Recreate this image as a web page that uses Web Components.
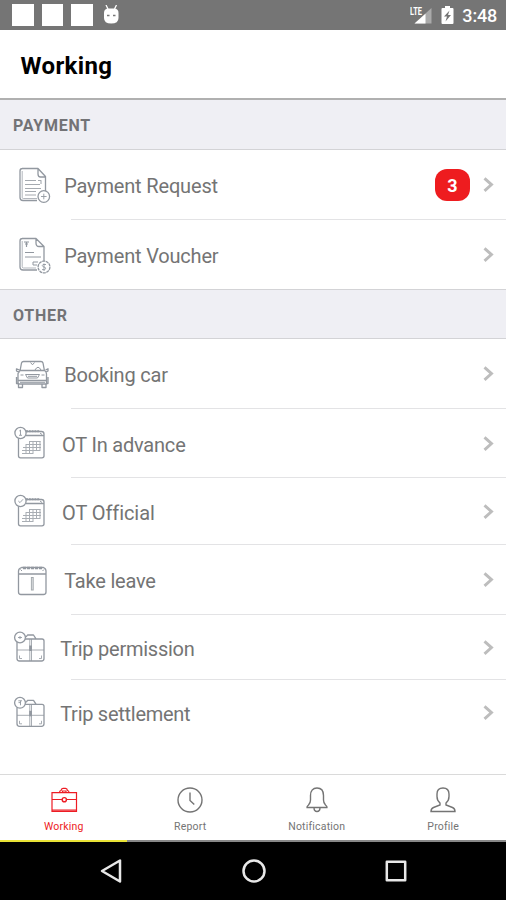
<!DOCTYPE html>
<html lang="en"><head><meta charset="utf-8"><title>Working</title>
<style>
html,body{margin:0;padding:0}
body{width:506px;height:900px;overflow:hidden;background:#fff;font-family:Roboto,"Liberation Sans",sans-serif;color:#707070}
</style></head><body>
<work-app></work-app>
<script>
const define=(name,html,setup)=>customElements.define(name,class extends HTMLElement{
  connectedCallback(){
    if(this.shadowRoot)return;
    const t=document.createElement('template');
    t.innerHTML=html;
    const r=this.attachShadow({mode:'open'});
    r.append(t.content.cloneNode(true));
    if(setup)setup(this,r);
  }
});

const calendar=`<path d="M20 431.500H41.500Q44 431.500 44 434V456Q44 457.800 42 457.800H20.500Q18.500 457.800 18.500 456V438M26 435.500H43.500" /><path d="M26 431.300H40" stroke-width="2" stroke-dasharray="2 .8"/><path d="M40 433L42 434.500" stroke-width="1"/><circle cx="20.500" cy="433" r="5.600" fill="#fff"/>
<g stroke="#a9aeb4" stroke-width="1"><path d="M30 441.500H40.500M26 444.500H41M23 447.500H41M22 450.500H40M22 453.500H33M26 444V454M29.500 441V454M33 441V454M36.500 441V451M40 441V451"/></g>`;
const bag=`<path d="M25 636.500H26.500L27.500 635H33.500L36 638.800M25 639H42Q44 639 44 641V658.500Q44 661 41.500 661H19.500Q17 661 17 658.500V642" /><path d="M17 650H44M29.800 639V661M31.500 639V661" stroke-width=".8"/><path d="M19.500 655.500V658.500H22M41.500 655.500V658.500H39" stroke-width=".8"/><path d="M30.600 645.500V651" stroke-width="2.800"/><circle cx="20" cy="637.500" r="5.400" fill="#fff"/>`;
const icons={
 request:['0 150 56 70',`<path d="M22 168.500H38L45.500 176.500V192M38 168.500V174Q38 177 40.500 177H45M37 200.500H23Q20 200.500 20 197.500V171Q20 168.500 22.500 168.500" /><path d="M22.200 171V197.500Q22.200 198.500 23.500 198.500H37" stroke-width=".7"/><path d="M25 180.500H36M38 180.500H41V184M25 184.500H40M25 188.500H41M25 191.500H36M25 195H36" stroke-width="1.100" stroke="#a5aab0"/><circle cx="43.800" cy="196.500" r="5.800" fill="#fff"/><path d="M41 196.500H46.600M43.800 193.700V199.300" stroke-width=".9"/>`],
 voucher:['0 220 56 69',`<path d="M22 238.500H36L44 246.500V262M36 238.500V243Q36 246.500 39 246.500H44M37 270H23Q20 270 20 267V241Q20 238.500 22.500 238.500" /><path d="M22.200 241V266.500Q22.200 268 23.500 268H36" stroke-width=".7"/><path d="M24 242H29M25 244H28M26.500 242V247" stroke-width="1.200"/><path d="M25 252.500H34M25 257H41M33 262H38M33 262V265H37" stroke-width="1"/><circle cx="44" cy="267" r="5.900" fill="#fff" stroke-dasharray="3 .6"/><path d="M46 264.500H43Q41.500 265.700 43 266.700L45.300 267.500Q46.300 269 44.800 269.600H42M44 263.500V271" stroke-width=".9"/>`],
 car:['0 339 56 70',`<path d="M20 371L21.500 363Q22 361.500 23.500 361.500H41Q42.500 361.500 43 363L44.500 371M20.500 370.500H44.500Q46.500 371.500 46.500 374V384H18V374Q18 371.500 20.500 370.500M19.500 370L16.500 368.800V371L19.500 372.500M45.500 370L48 368.800V371L45.500 372.500M18.500 380.500H46M18.500 384V387.500H22.500V384M42 384V387.500H46V384M16.500 377V383.500H19M48 377V383.500H46" /><path d="M25.500 374.500H39.500L37.500 378H27.500ZM28 376.300H37M20.500 375H23.500M41.500 375H44.500M20 382.300H45M30.500 362.500L32.500 364.800L34.500 362.500M35 370Q38 364.500 41 370" stroke-width="1"/>`],
 advance:['0 409 56 69',calendar+`<path d="M20.500 430V435M19.300 431L20.500 430M19 435.300H22" stroke-width=".9"/>`],
 official:['0 477 56 67',`<g transform="translate(0 67)">${calendar}<path d="M18.300 433L20 434.600L23 431.300" stroke-width=".9"/></g>`],
 leave:['0 545 56 70',`<path d="M21.500 567.500H43.500Q46 568.500 46 571V592Q46 594.500 43.500 594.500H21Q18.500 594.500 18.500 592V571Q18.500 568.500 21.500 567.500M19 574H46" /><path d="M23 568H42" stroke-width="2.600" stroke-dasharray="3 1"/><path d="M32.300 577V590.500" stroke-width="2.800" stroke="#a3a8ad"/><path d="M32.300 578V589.500" stroke="#fff" stroke-width=".6"/><path d="M20.500 569.500L22 571M44 569.500L42.500 571" stroke-width="1"/>`],
 permission:['0 615 56 65',bag+`<path d="M18 637.500H22M20 636V639" stroke-width=".9"/>`],
 settlement:['0 680 56 66',`<g transform="translate(0 65.300)">${bag}<path d="M18.300 635.500H22M20.500 635.500V640M18.500 637.300H21" stroke-width=".9"/></g>`]
};
const tabs={
 working:'<path d="M9.500 7.500Q9.500 5.800 11 5.500Q11.300 3.300 13 3.300H15.500Q17.200 3.300 17.500 5.500Q19 5.800 19 7.500M12.500 7.500V6H16V7.500M2 7.700H26.500V26.300H2ZM2 14.500H12M16.500 14.500H26.500M2 25H26.500" stroke-width="1.200"/><circle cx="14.300" cy="14.700" r="2.100"/>',
 report:'<circle cx="14" cy="15" r="12"/><path d="M14 7.500V15.500L18.300 19.500"/>',
 notification:'<path d="M4 22.500H24Q24.300 21.500 22.500 20Q20.500 18 20.500 15V10.500C20.500 5.500 18 3 14 3S7.500 5.500 7.500 10.500V15Q7.500 18 5.500 20Q3.700 21.500 4 22.500ZM11 22.500Q11 26.500 14 26.500T17 22.500"/>',
 profile:'<path d="M14 3C9.800 3 8 5.500 8 9V11.500Q8 15.500 11 18V20L4.500 22.500Q2 23.500 2 26.500H26Q26 23.500 23.500 22.500L17 20V18Q20 15.500 20 11.500V9C20 5.500 18.200 3 14 3Z"/>'
};

define('status-bar',`<style>
:host{display:flex;height:30px;box-sizing:border-box;background:#757575;color:#fff;align-items:center;padding:0 9px 0 12px}
.sq{width:21.500px;height:21.500px;background:#fff;margin-right:8px}
.droid{margin-left:2px}.space{flex:1}
.lte{margin-right:9px}.bat{margin-right:8px}
.time{font-size:18px;font-weight:500;line-height:30px;letter-spacing:-.2px;padding-top:2px}
svg{display:block}
</style><i class="sq"></i><i class="sq"></i><i class="sq"></i>
<svg class="droid" width="17" height="20" viewBox="0 0 17 20"><path d="M3 0L5 4M13.500 0L11.500 4" stroke="#fff" stroke-width="1.300"/><path d="M1 8Q1 3.500 5.500 3.500H11Q15.500 3.500 15.500 8V13Q15.500 18.500 8.200 18.500Q1 18.500 1 13Z" fill="#fff"/><path d="M4 10.500H6.500M10 10.500H12.500" stroke="#777" stroke-width="1.300"/></svg>
<span class="space"></span>
<svg class="lte" width="22" height="20" viewBox="0 0 22 20"><path d="M21.500 3V18.500H4.500Z" fill="#aaa"/><path d="M15.500 8.700V18.500H4.500Z" fill="#fff"/><path d="M0 0H13V10H0Z" fill="#757575"/><text x="0" y="9.500" font-size="10.500" font-weight="700" fill="#fff" textLength="12" lengthAdjust="spacingAndGlyphs">LTE</text></svg>
<svg class="bat" width="13" height="20" viewBox="0 0 13 20"><path d="M4 1H9V3H11.500Q12.500 3 12.500 4V18Q12.500 19 11.500 19H1.500Q.5 19 .5 18V4Q.5 3 1.500 3H4Z" fill="#fff"/><path d="M8.500 5.500L3 11.500H6L4.500 16.500L10 10H7Z" fill="#757575"/></svg>
<span class="time">3:48</span>`);

define('page-title',`<style>
:host{display:flex;height:70px;box-sizing:border-box;align-items:center;padding:3px 0 0 20.500px;border-bottom:2px solid #b0b0b0;background:#fff;color:#000;font-size:24px;font-weight:700;letter-spacing:.35px}
</style><slot></slot>`);

define('section-head',`<style>
:host{display:flex;height:50px;box-sizing:border-box;align-items:center;padding:2px 0 0 13px;background:#efeff4;border-bottom:1px solid #d3d3d6;font-size:16px;font-weight:700;letter-spacing:.75px;color:#737376}
:host([ruled]){border-top:1px solid #d3d3d6}
</style><slot></slot>`);

define('menu-row',`<style>
:host{display:flex;position:relative;box-sizing:border-box;font-size:20px;line-height:24px;color:#747474}
.icon{flex:none;fill:none;stroke:#9298a0;stroke-width:1.300;stroke-linejoin:round}
.body{flex:1;display:flex;align-items:center;box-sizing:border-box;padding-right:12.500px}
.label{flex:1;white-space:nowrap;padding-top:2px}
.rule{position:absolute;left:71px;right:0;bottom:0;height:1px;background:#e3e3e5}
:host([last]) .rule{display:none}
.arrow{display:block;fill:none;stroke:#bdbdbd;stroke-width:2.900}
::slotted(*){margin-right:12.500px}
</style><svg class="icon"></svg><div class="body"><span class="label"></span><slot></slot>
<svg class="arrow" width="11" height="16" viewBox="0 0 11 16"><path d="M1.500 1.300L8.500 7.600L1.500 13.900"/></svg></div><i class="rule"></i>`,(el,r)=>{
  const [box,art]=icons[el.getAttribute('icon')],[,,w,h]=box.split(' ');
  const s=r.querySelector('.icon');
  s.setAttribute('viewBox',box);s.setAttribute('width',w);s.setAttribute('height',h);s.innerHTML=art;
  el.style.height=el.getAttribute('height')+'px';
  const l=r.querySelector('.label');
  l.textContent=el.getAttribute('label');
  l.style.paddingLeft=el.getAttribute('indent')+'px';
  l.style.letterSpacing=(el.getAttribute('track')||0)+'px';
});

define('count-badge',`<style>
:host{display:flex;width:35px;height:32px;border-radius:12px;background:#ee1c1f;color:#fff;align-items:center;justify-content:center;font-size:18px;font-weight:700;box-sizing:border-box;padding-top:1px}
</style><slot></slot>`);

define('tab-item',`<style>
:host{flex:1;display:flex;flex-direction:column;align-items:center;box-sizing:border-box;padding:10px 0 0 1px;color:#747474;border-bottom:2px solid #888;font-size:10.500px;line-height:14px;letter-spacing:var(--ls,.2px)}
:host([active]){color:#ed1c24;border-color:#e8e236}
svg{fill:none;stroke:currentColor;stroke-width:1.400;margin-bottom:5px}
</style><svg width="28" height="30" viewBox="0 0 28 30"></svg><slot></slot>`,(el,r)=>{
  r.querySelector('svg').innerHTML=tabs[el.getAttribute('icon')];
});

define('tab-strip',`<style>:host{display:flex;height:68px;box-sizing:border-box;border-top:1px solid #dadada;background:#fff}</style><slot></slot>`);

define('nav-keys',`<style>
:host{display:flex;height:58px;box-sizing:border-box;padding-left:1px;background:#000;align-items:center;justify-content:center;gap:118.500px}
svg{display:block;fill:none;stroke:#e8e8e8;stroke-width:2.500;stroke-linejoin:round}
</style>
<svg width="24" height="26" viewBox="0 0 24 26"><path d="M21 2.500V23.500L3 13Z"/></svg>
<svg width="24" height="26" viewBox="0 0 24 26"><circle cx="12" cy="13" r="10.500"/></svg>
<svg width="24" height="26" viewBox="0 0 24 26"><path d="M2.800 3.800H21.200V22.200H2.800Z"/></svg>`);

define('work-app',`<style>
:host{display:flex;flex-direction:column;width:506px;height:900px;background:#fff}
main{flex:1}
</style>
<status-bar></status-bar><page-title>Working</page-title>
<main>
<section-head>PAYMENT</section-head>
<menu-row icon="request" height="70" indent="8.200" track="-.16" label="Payment Request"><count-badge>3</count-badge></menu-row>
<menu-row icon="voucher" height="69" indent="8.200" track="-.18" label="Payment Voucher" last></menu-row>
<section-head ruled>OTHER</section-head>
<menu-row icon="car" height="70" indent="8.200" track="-.18" label="Booking car"></menu-row>
<menu-row icon="advance" height="69" indent="6" track="-.2" label="OT In advance"></menu-row>
<menu-row icon="official" height="67" indent="6" track="-.08" label="OT Official"></menu-row>
<menu-row icon="leave" height="70" indent="8.200" track="-.2" label="Take leave"></menu-row>
<menu-row icon="permission" height="65" indent="4.200" track="-.24" label="Trip permission"></menu-row>
<menu-row icon="settlement" height="66" indent="4.200" track="-.27" label="Trip settlement" last></menu-row>
</main>
<tab-strip><tab-item icon="working" active>Working</tab-item><tab-item icon="report">Report</tab-item><tab-item icon="notification">Notification</tab-item><tab-item icon="profile">Profile</tab-item></tab-strip>
<nav-keys></nav-keys>`);
</script></body></html>
